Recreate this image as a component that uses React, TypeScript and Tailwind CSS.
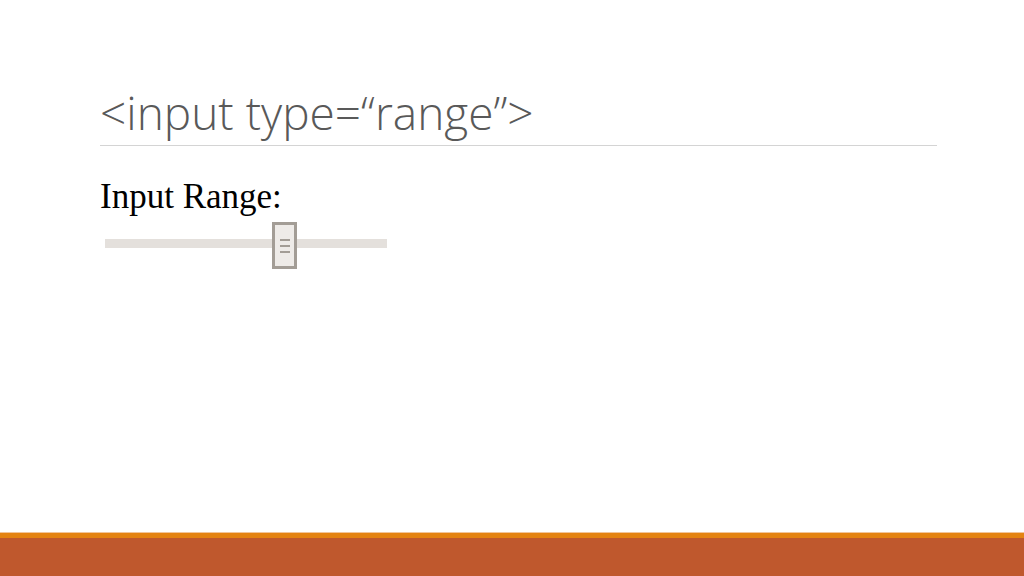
export default function App() {
  return (
    <div className="w-[1024px] h-[576px] bg-white flex flex-col overflow-hidden">
      <div className="flex-1 pl-[100px] pr-[87px] pt-[83px]">
        <h1
          className="text-[46px] leading-[58px] text-[#595959] font-light"
          style={{ fontFamily: '"Open Sans", sans-serif' }}
        >
          &lt;input type=“range”&gt;
        </h1>
        <div className="h-px bg-[#d4d4d4] mt-[4px]" />
        <div
          className="mt-[31px] text-[35px] leading-[40px] text-black"
          style={{ fontFamily: '"Liberation Serif", serif' }}
        >
          Input Range:
        </div>
        <div className="relative ml-[5px] w-[282px] h-[47px] mt-[5px] flex items-start">
          <div className="w-full h-[9px] mt-[17px] bg-[#e4e0dc]" />
          <div className="absolute left-[167px] top-0 w-[25px] h-[47px] border-[3px] border-[#a39d96] bg-[#eeebe8] flex flex-col items-center justify-center gap-[4px]">
            <div className="w-[10px] h-[2px] bg-[#a39d96]" />
            <div className="w-[10px] h-[2px] bg-[#a39d96]" />
            <div className="w-[10px] h-[2px] bg-[#a39d96]" />
          </div>
        </div>
      </div>
      <div className="h-px bg-[#f2c59a]" />
      <div className="h-[5px] bg-[#e48312]" />
      <div className="h-[38px] bg-[#bf582d]" />
    </div>
  );
}
